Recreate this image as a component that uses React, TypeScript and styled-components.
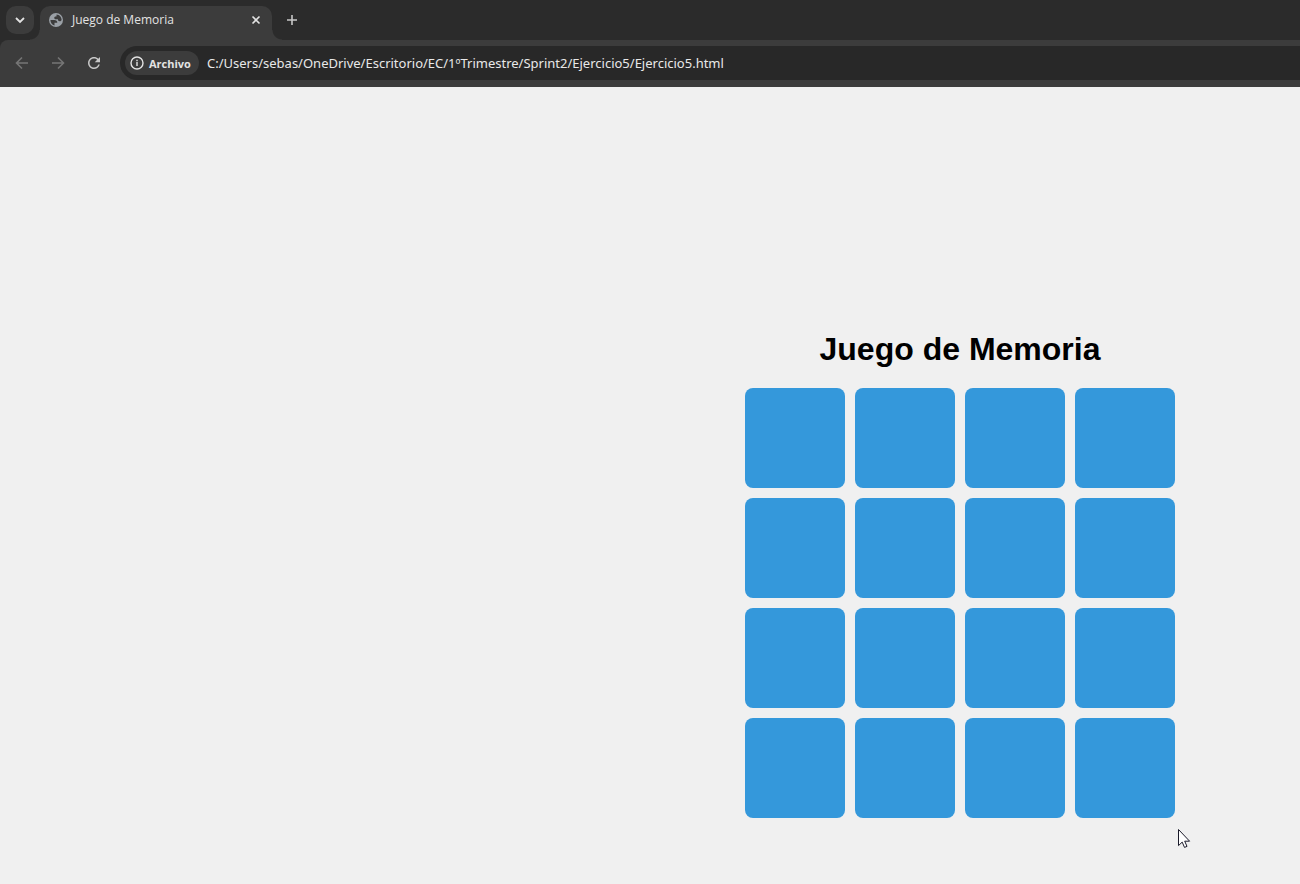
import React, { useState } from 'react';
import styled, { createGlobalStyle } from 'styled-components';

const GlobalStyle = createGlobalStyle`
  *, *::before, *::after { box-sizing: border-box; }
  body { margin: 0; background: #f0f0f0; }
  button { border: 0; padding: 0; font: inherit; color: inherit; background: none; }
`;

const Browser = styled.div`
  display: flex;
  flex-direction: column;
  min-height: 100vh;
  overflow: hidden;
  font-family: 'Noto Sans', 'Open Sans', sans-serif;
`;

const TabStrip = styled.header`
  display: flex;
  align-items: flex-end;
  height: 40px;
  padding-left: 6px;
  background: #2b2b2b;
`;

const TabSearch = styled.button`
  display: grid;
  place-items: center;
  width: 28px;
  height: 28px;
  margin: 0 6px 6px 0;
  border-radius: 10px;
  background: #3c3c3c;
`;

const Tab = styled.div`
  position: relative;
  display: flex;
  align-items: center;
  width: 232px;
  height: 34px;
  padding: 0 8px 6px;
  border-radius: 10px 10px 0 0;
  background: #3c3c3c;

  &::before,
  &::after {
    content: '';
    position: absolute;
    bottom: 0;
    width: 10px;
    height: 10px;
  }
  &::before {
    right: 100%;
    background: radial-gradient(circle at 0 0, transparent 9px, #3c3c3c 10px);
  }
  &::after {
    left: 100%;
    background: radial-gradient(circle at 100% 0, transparent 9px, #3c3c3c 10px);
  }
`;

const TabTitle = styled.span`
  flex: 1;
  margin-left: 8px;
  font-family: 'Open Sans', 'Noto Sans', sans-serif;
  font-size: 12px;
  line-height: 18px;
  color: #e3e3e3;
`;

const TabButton = styled.button`
  display: grid;
  place-items: center;
  width: 16px;
  height: 16px;
`;

const NewTab = styled.button`
  display: grid;
  place-items: center;
  width: 28px;
  height: 28px;
  margin: 0 0 6px 6px;
`;

const ToolbarBack = styled.div`
  background: #2b2b2b;
`;

const Toolbar = styled.nav`
  display: flex;
  align-items: center;
  height: 47px;
  padding: 0 0 1px 8px;
  border-radius: 8px 0 0 0;
  background: #3c3c3c;
`;

const NavButton = styled.button`
  display: grid;
  place-items: center;
  width: 28px;
  height: 28px;
  margin-right: 8px;
`;

const AddressBar = styled.div`
  display: flex;
  flex: 1;
  align-items: center;
  height: 34px;
  margin-left: 4px;
  padding-left: 5px;
  border-radius: 17px 0 0 17px;
  background: #282828;
`;

const SchemeChip = styled.button`
  display: flex;
  align-items: center;
  gap: 4px;
  width: 74px;
  height: 24px;
  padding-left: 4px;
  border-radius: 12px;
  background: #3c3c3c;
  color: #e3e3e3;
  font-family: 'Open Sans', 'Noto Sans', sans-serif;
  font-size: 11px;
  font-weight: 700;
`;

const UrlInput = styled.input`
  flex: 1;
  min-width: 0;
  margin-left: 8px;
  padding: 0;
  border: 0;
  outline: 0;
  background: transparent;
  color: #e8e8e8;
  font-family: inherit;
  font-size: 13px;
  line-height: 20px;
`;

const Page = styled.main`
  display: flex;
  flex: 1;
  justify-content: flex-end;
  align-items: flex-start;
  padding: 243px 125px 66px 0;
  background: #f0f0f0;
`;

const Game = styled.section`
  position: relative;
  display: flex;
  flex-direction: column;
  align-items: center;
  gap: 20px;
`;

const Title = styled.h1`
  margin: 0;
  font-family: 'Liberation Sans', Arial, sans-serif;
  font-size: 32px;
  line-height: 38px;
  font-weight: 700;
  color: #000;
`;

const Board = styled.div`
  display: grid;
  grid-template-columns: repeat(4, 100px);
  grid-auto-rows: 100px;
  gap: 10px;
`;

const Card = styled.button`
  border-radius: 8px;
  background: #3498db;
  cursor: pointer;
`;

const Pointer = styled.svg`
  position: absolute;
  top: 100%;
  left: 100%;
  margin: 10px 0 0 2px;
  pointer-events: none;
`;

const ChevronIcon = () => (
  <svg width="12" height="12" viewBox="0 0 12 12" fill="none" stroke="#e3e3e3" strokeWidth="1.8">
    <path d="M2 4l4 4 4-4" />
  </svg>
);

const GlobeIcon = () => (
  <svg width="16" height="16" viewBox="0 0 16 16">
    <circle cx="8" cy="8" r="7" fill="#9aa0a6" />
    <path
      fill="#3c3c3c"
      d="M2.4 8H6.2C8.3 8 9.3 8.9 9.3 10.7H6.5V13.4C4 12.8 2.4 10.6 2.4 8ZM8.6 2.5C11.4 2.7 13.6 5 13.6 8C13.2 8.9 12.5 9.3 11.7 9.3C10.5 9.3 9.9 8.6 9.9 7.3H8C6.7 7.3 6.1 6.5 6.3 5.4C6.5 4.6 7.2 4.3 8.4 4.4Z"
    />
  </svg>
);

const CloseIcon = () => (
  <svg width="16" height="16" viewBox="0 0 16 16" stroke="#e3e3e3" strokeWidth="1.6">
    <path d="M4.5 4.5l7 7M11.5 4.5l-7 7" />
  </svg>
);

const PlusIcon = () => (
  <svg width="16" height="16" viewBox="0 0 16 16" stroke="#c7c7c7" strokeWidth="1.6">
    <path d="M8 3v10M3 8h10" />
  </svg>
);

const ArrowIcon = ({ forward }: { forward?: boolean }) => (
  <svg width="16" height="16" viewBox="0 0 16 16" fill="none" stroke="#757575" strokeWidth="1.6">
    <path d={forward ? 'M2 8h11M8 2.5L13.5 8 8 13.5' : 'M14 8H3M8 2.5L2.5 8 8 13.5'} />
  </svg>
);

const ReloadIcon = () => (
  <svg width="18" height="18" viewBox="0 0 24 24" fill="#c7c7c7">
    <path d="M17.65 6.35C16.2 4.9 14.21 4 12 4c-4.42 0-7.99 3.58-7.99 8s3.57 8 7.99 8c3.73 0 6.84-2.55 7.73-6h-2.08c-.82 2.33-3.04 4-5.65 4-3.31 0-6-2.69-6-6s2.69-6 6-6c1.66 0 3.14.69 4.22 1.78L13 11h7V4l-2.35 2.35z" />
  </svg>
);

const InfoIcon = () => (
  <svg width="16" height="16" viewBox="0 0 16 16" fill="none" stroke="#e3e3e3" strokeWidth="1.4">
    <circle cx="8" cy="8" r="6" />
    <path d="M8 7v4M8 4.8v1.4" />
  </svg>
);

export default function App() {
  const [url, setUrl] = useState(
    'C:/Users/sebas/OneDrive/Escritorio/EC/1ºTrimestre/Sprint2/Ejercicio5/Ejercicio5.html',
  );

  return (
    <>
      <GlobalStyle />
      <Browser>
        <TabStrip>
          <TabSearch aria-label="Buscar pestañas"><ChevronIcon /></TabSearch>
          <Tab>
            <GlobeIcon />
            <TabTitle>Juego de Memoria</TabTitle>
            <TabButton aria-label="Cerrar pestaña"><CloseIcon /></TabButton>
          </Tab>
          <NewTab aria-label="Nueva pestaña"><PlusIcon /></NewTab>
        </TabStrip>
        <ToolbarBack>
          <Toolbar>
            <NavButton aria-label="Atrás"><ArrowIcon /></NavButton>
            <NavButton aria-label="Adelante"><ArrowIcon forward /></NavButton>
            <NavButton aria-label="Recargar"><ReloadIcon /></NavButton>
            <AddressBar>
              <SchemeChip><InfoIcon />Archivo</SchemeChip>
              <UrlInput
                aria-label="Dirección"
                spellCheck={false}
                value={url}
                onChange={(e) => setUrl(e.target.value)}
              />
            </AddressBar>
          </Toolbar>
        </ToolbarBack>
        <Page>
          <Game>
            <Title>Juego de Memoria</Title>
            <Board>
              {Array.from({ length: 16 }, (_, i) => (
                <Card key={i} aria-label={`Carta ${i + 1}`} />
              ))}
            </Board>
            <Pointer width="14" height="22" viewBox="0 0 14 22">
              <path
                d="M1.5 1.5V17.6L5.2 14.1L7.5 19.4L10 18.4L7.7 13.2H12.6Z"
                fill="#fff"
                stroke="#1a1a2a"
                strokeWidth="1"
              />
            </Pointer>
          </Game>
        </Page>
      </Browser>
    </>
  );
}
